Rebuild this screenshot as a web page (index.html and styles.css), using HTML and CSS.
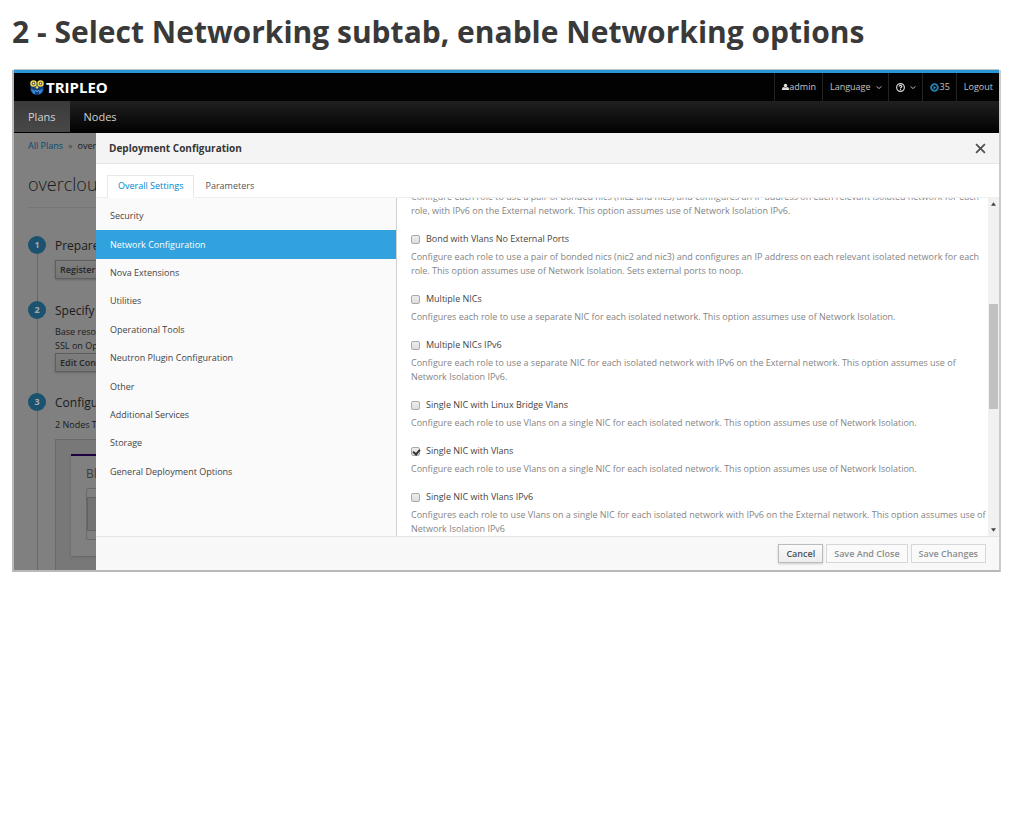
FILE: index.html
```html
<!DOCTYPE html>
<html lang="en">
<head>
<meta charset="utf-8">
<title>TripleO - Deployment Configuration</title>
<link rel="stylesheet" href="styles.css">
</head>
<body>
<h1 class="slide-title">2 - Select Networking subtab, enable Networking options</h1>
<div class="frame">
  <header class="masthead">
    <a class="brand" href="#">
      <svg class="owl" viewBox="0 0 28 30" aria-hidden="true">
        <path d="M1 7 L6 10 H22 L27 7 V20 Q25 29 14 30 Q3 29 1 20Z" fill="#173f7c"/>
        <path d="M2 17 Q3 27 11 29 L8 20Z M26 17 Q25 27 17 29 L20 20Z" fill="#2e83d0"/>
        <circle cx="7" cy="7" r="6.500" fill="#ecd94c"/><circle cx="21" cy="7" r="6.500" fill="#ecd94c"/>
        <circle cx="7" cy="7" r="2.500" fill="#fff" stroke="#222" stroke-width="1.800"/><circle cx="21" cy="7" r="2.500" fill="#fff" stroke="#222" stroke-width="1.800"/>
        <path d="M14 11 L17 15 L14 18 L11 15Z" fill="#ecd94c"/>
        <path d="M8 25 L11 20 L14 24 L17 20 L20 25" fill="none" stroke="#56a8e8" stroke-width="2"/>
      </svg>
      <span>TRIPLEO</span>
    </a>
    <nav class="utility" aria-label="Utility">
      <a class="user" href="#"><svg class="user-icon" viewBox="0 0 14 14" aria-hidden="true"><circle cx="7" cy="4" r="3.500"/><path d="M0 13V11Q0 7 4 7Q7 9 10 7Q14 7 14 11V13Z"/></svg>admin</a>
      <a class="language" href="#">Language <svg class="caret" viewBox="0 0 8 6" aria-hidden="true"><path d="M1 1.500 L4 4.500 L7 1.500"/></svg></a>
      <a class="help" href="#" aria-label="Help"><svg class="help-icon" viewBox="0 0 14 14" aria-hidden="true"><circle cx="7" cy="7" r="6"/><path d="M4.800 5.500Q5 3.700 7 3.700T9.200 5.500Q9.200 6.500 7 7.500V8.500M7 9.500V11"/></svg><svg class="caret" viewBox="0 0 8 6" aria-hidden="true"><path d="M1 1.500 L4 4.500 L7 1.500"/></svg></a>
      <a class="tasks" href="#"><svg class="play-icon" viewBox="0 0 12 12" aria-hidden="true"><circle cx="6" cy="6" r="4.500"/><path d="M4.500 3.500V8.500L8.500 6Z"/></svg>35</a>
      <a class="logout" href="#">Logout</a>
    </nav>
  </header>
  <nav class="primary" aria-label="Primary">
    <a class="active" href="#">Plans</a>
    <a href="#">Nodes</a>
  </nav>
  <div class="stage">
    <main class="plan">
      <div class="crumbs"><a href="#">All Plans</a><span class="sep">»</span><span>over</span></div>
      <h2 class="plan-title">overcloud</h2>
      <ol class="steps">
        <li class="step step-one"><span class="badge">1</span><div class="step-body"><h3>Prepare</h3><button type="button">Register</button></div></li>
        <li class="step step-two"><span class="badge">2</span><div class="step-body"><h3>Specify</h3><p>Base reso<br>SSL on Op</p><button type="button">Edit Con</button></div></li>
        <li class="step step-three"><span class="badge">3</span><div class="step-body"><h3>Configu</h3><p>2 Nodes T</p><div class="roles"><div class="role"><h4>Bl</h4><div class="counter"><div class="count"></div></div></div></div></div></li>
      </ol>
    </main>
    <section class="drawer" role="dialog" aria-labelledby="drawer-title">
      <header class="drawer-head">
        <h2 id="drawer-title">Deployment Configuration</h2>
        <button class="close" type="button" aria-label="Close"><svg viewBox="0 0 10 10" aria-hidden="true"><path d="M1 1 L9 9 M9 1 L1 9"/></svg></button>
      </header>
      <nav class="tabs" aria-label="Configuration sections">
        <a class="active" href="#">Overall Settings</a>
        <a href="#">Parameters</a>
      </nav>
      <div class="panes">
        <nav class="sections" aria-label="Settings groups">
          <a href="#">Security</a>
          <a class="active" href="#">Network Configuration</a>
          <a href="#">Nova Extensions</a>
          <a href="#">Utilities</a>
          <a href="#">Operational Tools</a>
          <a href="#">Neutron Plugin Configuration</a>
          <a href="#">Other</a>
          <a href="#">Additional Services</a>
          <a href="#">Storage</a>
          <a href="#">General Deployment Options</a>
        </nav>
        <div class="options">
          <div class="option-list">
            <p>Configure each role to use a pair of bonded nics (nic2 and nic3) and configures an IP address on each relevant isolated network for each role, with IPv6 on the External network. This option assumes use of Network Isolation IPv6.</p>
            <label><input type="checkbox"><span>Bond with Vlans No External Ports</span></label>
            <p>Configure each role to use a pair of bonded nics (nic2 and nic3) and configures an IP address on each relevant isolated network for each role. This option assumes use of Network Isolation. Sets external ports to noop.</p>
            <label><input type="checkbox"><span>Multiple NICs</span></label>
            <p>Configures each role to use a separate NIC for each isolated network. This option assumes use of Network Isolation.</p>
            <label><input type="checkbox"><span>Multiple NICs IPv6</span></label>
            <p>Configure each role to use a separate NIC for each isolated network with IPv6 on the External network. This option assumes use of Network Isolation IPv6.</p>
            <label><input type="checkbox"><span>Single NIC with Linux Bridge Vlans</span></label>
            <p>Configure each role to use Vlans on a single NIC for each isolated network. This option assumes use of Network Isolation.</p>
            <label><input type="checkbox" checked><span>Single NIC with Vlans</span></label>
            <p>Configure each role to use Vlans on a single NIC for each isolated network. This option assumes use of Network Isolation.</p>
            <label><input type="checkbox"><span>Single NIC with Vlans IPv6</span></label>
            <p>Configures each role to use Vlans on a single NIC for each isolated network with IPv6 on the External network. This option assumes use of Network Isolation IPv6</p>
          </div>
        </div>
        <div class="scrollbar" aria-hidden="true">
          <svg viewBox="0 0 6 4"><path d="M0 4 L3 0 L6 4Z"/></svg>
          <div class="track"><div class="thumb"></div></div>
          <svg viewBox="0 0 6 4"><path d="M0 0 L3 4 L6 0Z"/></svg>
        </div>
      </div>
      <footer class="actions">
        <button class="cancel" type="button">Cancel</button>
        <button type="button" disabled>Save And Close</button>
        <button type="button" disabled>Save Changes</button>
      </footer>
    </section>
  </div>
</div>
</body>
</html>
```
FILE: styles.css
```css
* { box-sizing: border-box; }
body { margin: 0; padding: 0 23px 0 12px; background: #fff; color: #363636; font-family: "Open Sans", sans-serif; font-size: 9px; line-height: 14px; }
h1, h2, h3, h4, p, ol { margin: 0; padding: 0; }
a { color: inherit; text-decoration: none; }
button { font: inherit; }

.slide-title { padding: 10px 0 16px; color: #393939; font-size: 30px; line-height: 44px; font-weight: 700; white-space: nowrap; }
.frame { border: 2px solid #b9b9b9; border-top: 0; border-right-color: #cbcbcb; }

.masthead { display: flex; justify-content: space-between; height: 31px; border-top: 3px solid #2a96d6; background: #020202; box-shadow: 0 -1px #b9c4ca; }
.brand { display: flex; align-items: center; gap: 2px; padding-left: 16px; color: #fff; font-size: 15px; font-weight: 700; }
.owl { width: 14px; height: 15px; }
.utility { display: flex; color: #c3c3c3; }
.utility a { display: flex; align-items: center; padding: 0 6px 0 7px; border-left: 1px solid #232323; }
.caret { width: 6px; height: 5px; margin-left: 5px; fill: none; stroke: #ccc; stroke-width: 1.3; }
.user-icon { width: 7px; height: 8px; fill: #ddd; }
.help-icon { width: 9px; height: 9px; fill: none; stroke: #ddd; stroke-width: 1.8; }
.play-icon { width: 9px; height: 9px; margin-right: 1px; fill: #2580ae; }
.play-icon circle { fill: none; stroke: #2580ae; stroke-width: 2.6; }

.primary { display: flex; height: 32px; background: linear-gradient(#202020, #020202); border-bottom: 1px solid #000; color: #d1d1d1; font-size: 11px; }
.primary a { display: flex; align-items: center; padding: 0 14px; }
.primary .active { background: linear-gradient(#3a3a3a, #484848); }

.stage { position: relative; overflow: hidden; background: #808080; }
.plan { padding: 6px 14px 0; height: 437px; overflow: hidden; color: #1b1b1b; }
.crumbs { display: flex; }
.crumbs a { color: #074b70; }
.sep { padding: 0 5px; color: #444; }
.plan-title { margin-top: 17px; padding-bottom: 9px; border-bottom: 1px solid #767676; font-size: 18px; line-height: 28px; font-weight: 300; }
.steps { list-style: none; margin-top: 28px; background: linear-gradient(#686868, #686868) 9px 0 / 1px 100% no-repeat; }
.step { display: flex; gap: 9px; }
.step-one { height: 65px; }
.step-two { height: 92px; }
.step-three { height: 190px; }
.badge { flex: none; width: 18px; height: 18px; border-radius: 50%; background: #1a5270; color: #aaa; font-weight: 700; line-height: 18px; text-align: center; }
.step-body { flex: 1; white-space: nowrap; }
.step h3 { font-size: 12px; line-height: 20px; font-weight: 400; }
.step button { display: block; min-width: 90px; height: 19px; padding: 0 4px; border: 1px solid #5e5e5e; background: linear-gradient(#7d7d7d, #767676); box-shadow: 0 1px 2px #666; color: #262626; font-weight: 600; line-height: 16px; text-align: left; }
.step-one button { margin-top: 4px; }
.step-two p { padding-top: 4px; }
.step-three p { padding: 5px 0 7px; }
.roles { height: 160px; padding: 14px 15px; border: 1px solid #696969; background: #787878; }
.role { height: 102px; padding: 10px 15px; border-top: 2px solid #1c0040; background: #808080; box-shadow: 0 1px 2px #666; }
.role h4 { color: #3c3c3c; font-size: 12px; line-height: 16px; font-weight: 400; }
.counter { height: 52px; margin-top: 6px; padding: 8px 0; border: 1px solid #696969; border-radius: 2px; }
.count { height: 34px; border: 1px solid #626262; background: #737373; }

.drawer { position: absolute; inset: 0 0 0 82px; display: flex; flex-direction: column; background: #fff; }
.drawer-head { display: flex; align-items: center; justify-content: space-between; height: 31px; padding: 0 13px; border-bottom: 1px solid #e5e5e5; background: #f4f4f4; }
.drawer-head h2 { font-size: 10px; font-weight: 700; }
.close { width: 11px; height: 11px; padding: 0; border: 0; background: none; line-height: 0; }
.close svg { width: 11px; height: 11px; fill: none; stroke: #505050; stroke-width: 1.6; }
.tabs { display: flex; height: 34px; padding: 11px 11px 0; border-bottom: 1px solid #eee; color: #555; }
.tabs a { height: 23px; padding: 4px 11px; }
.tabs .active { border: 1px solid #e8e8e8; border-bottom-color: #fff; padding: 3px 10px; color: #0088ce; }
.panes { flex: 1; min-height: 0; display: flex; }
.sections { flex: 0 0 301px; display: flex; flex-direction: column; padding: 4px 0 50px; border-right: 1px solid #d1d1d1; background: #fafafa; color: #444; }
.sections a { flex: 1; display: flex; align-items: center; padding: 0 14px; }
.sections .active { background: #31a2dd; color: #fff; }
.options { flex: 1; min-width: 0; overflow: hidden; }
.option-list { margin-top: -8px; padding: 0 2px 0 14px; color: #848484; }
.option-list label { display: flex; align-items: center; gap: 6px; height: 14px; margin-bottom: 4px; color: #444; }
.option-list p { margin-bottom: 14px; }
.option-list input { appearance: none; position: relative; width: 9px; height: 9px; margin: 0; border: 1px solid #aaa; border-radius: 2px; background: linear-gradient(#eee, #ddd); }
.option-list input:checked::after { content: ""; position: absolute; left: 2px; top: 0; width: 3px; height: 5px; border: solid #333; border-width: 0 2px 2px 0; transform: rotate(40deg); }
.scrollbar { flex: 0 0 11px; display: flex; flex-direction: column; align-items: center; padding: 4px 0; background: #f1f1f1; }
.scrollbar svg { width: 5px; height: 4px; fill: #444; }
.track { flex: 1; width: 9px; padding-top: 98px; }
.thumb { height: 105px; background: #c1c1c1; }
.actions { display: flex; justify-content: flex-end; gap: 3px; height: 34px; padding: 7px 13px; border-top: 1px solid #e4e4e4; background: #f8f8f8; }
.actions button { height: 19px; padding: 0 7px; border: 1px solid #d7d7d7; background: #fafafa; color: #8b8d8f; font-weight: 600; line-height: 16px; }
.actions .cancel { border-color: #bbb; background: linear-gradient(#fafafa, #ededed); box-shadow: 0 1px 2px #ccc; color: #4d5258; }
```
